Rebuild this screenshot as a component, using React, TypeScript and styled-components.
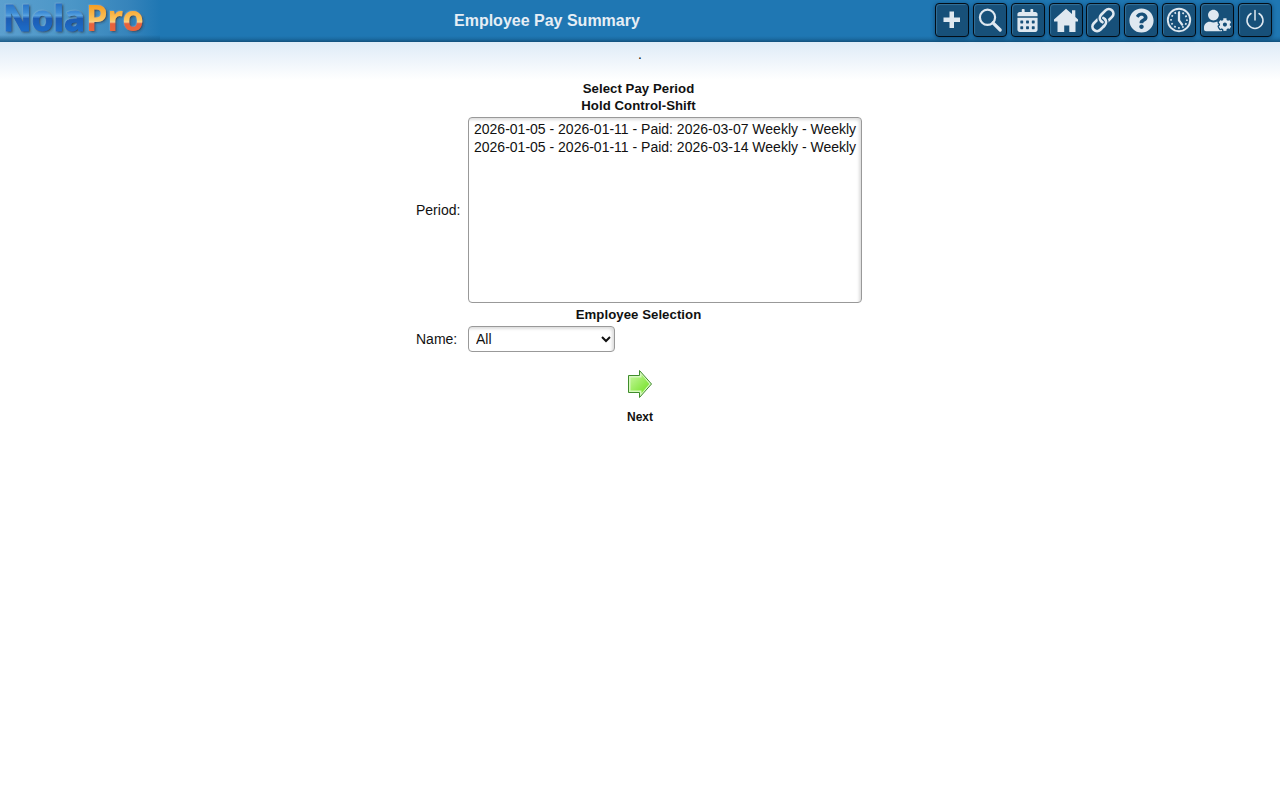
import React from "react";
import styled, { createGlobalStyle } from "styled-components";
import { FaCalendarAlt, FaQuestionCircle, FaUserCog } from "react-icons/fa";

const GlobalStyle = createGlobalStyle`
  * { box-sizing: border-box; }
  body {
    margin: 0;
    background: #fff;
    color: #111;
    font-family: "Liberation Sans", Arial, sans-serif;
    font-size: 14px;
  }
`;

const Header = styled.header`
  display: grid;
  grid-template-columns: 454px 1fr auto;
  height: 42px;
  padding-right: 8px;
  background: linear-gradient(#1f77b3 0, #1f77b3 36px, #1b6ca3 39px, #11507c 42px);
`;

const LogoBox = styled.div`
  width: 160px;
  height: 42px;
  background:
    linear-gradient(rgba(17, 80, 124, 0) 35px, rgba(17, 80, 124, 0.85) 42px),
    linear-gradient(90deg, #5b9fce 0, #4b96c7 45%, #3684bb 80%, #1f77b3 100%);
`;

const Title = styled.h1`
  margin: 0;
  font-size: 16px;
  line-height: 42px;
  color: #e6eef5;
  white-space: nowrap;
`;

const Toolbar = styled.nav`
  display: flex;
  gap: 3.9px;
  padding-top: 3px;
`;

const ToolButton = styled.button`
  display: flex;
  align-items: center;
  justify-content: center;
  width: 34px;
  height: 34px;
  padding: 0;
  border: 1px solid #020d17;
  border-radius: 4px;
  background: #175079;
  box-shadow: inset 1px 1px 1px #347099, 0 1px 4px rgba(6, 48, 82, 0.7);
  color: #dfe8f0;
`;

const Fade = styled.div`
  height: 38px;
  background: linear-gradient(#deebf7, #fff);
  text-align: center;
  line-height: 25px;
`;

const Form = styled.form`
  display: grid;
  grid-template-columns: 52px 394px;
  align-items: center;
  width: 446px;
  margin-left: 416px;
`;

const SectionTitle = styled.h2`
  grid-column: 1 / -1;
  margin: 0;
  padding-right: 1px;
  font-size: 13.2px;
  line-height: 17px;
  letter-spacing: 0.05px;
  text-align: center;
`;

const PeriodList = styled.select`
  width: 394px;
  height: 186px;
  margin: 3px 0;
  padding: 2px 3px;
  border: 1px solid #999;
  border-radius: 4px;
  background: #fff;
  box-shadow: inset -2px 2px 3px #ddd;
  color: #111;
  font: 14px "Liberation Sans", Arial, sans-serif;
  overflow: hidden;
  outline: none;

  option {
    min-height: 18px;
    padding: 1px 2px 0;
    line-height: 17px;
  }
`;

const NameSelect = styled.select`
  width: 147px;
  height: 26px;
  margin: 3px 0;
  padding: 0 0 0 3px;
  border: 1px solid #999;
  border-radius: 4px;
  background: #fff;
  box-shadow: inset -2px 2px 3px #ddd;
  color: #111;
  font: 14px "Liberation Sans", Arial, sans-serif;
`;

const NextButton = styled.button`
  display: flex;
  flex-direction: column;
  align-items: center;
  gap: 11px;
  margin: 14px auto 0;
  padding: 0;
  border: 0;
  background: none;
  color: #111;
  font: bold 12px/14px "Liberation Sans", Arial, sans-serif;
`;

const LogoArt = styled.svg`
  display: block;
  overflow: visible;
`;

const Logo = () => (
  <LogoArt width="160" height="42" viewBox="0 0 160 42" role="img" aria-label="NolaPro">
    <defs>
      <linearGradient id="nola" x1="0" y1="4" x2="0" y2="33" gradientUnits="userSpaceOnUse">
        <stop offset="0" stopColor="#2672c6" />
        <stop offset="0.3" stopColor="#3f8dd6" />
        <stop offset="0.4" stopColor="#5aa3e0" />
        <stop offset="0.5" stopColor="#1b5cb4" />
        <stop offset="1" stopColor="#1f6fcb" />
      </linearGradient>
      <linearGradient id="pro" x1="0" y1="4" x2="0" y2="33" gradientUnits="userSpaceOnUse">
        <stop offset="0" stopColor="#f59a1c" />
        <stop offset="0.55" stopColor="#fbc560" />
        <stop offset="0.62" stopColor="#f8d08a" />
        <stop offset="0.68" stopColor="#e8623c" />
        <stop offset="1" stopColor="#e8683c" />
      </linearGradient>
      <filter id="shade" x="-5%" y="-10%" width="112%" height="125%">
        <feDropShadow dx="1.2" dy="1" stdDeviation="0.8" floodColor="#0c2d49" floodOpacity="0.95" />
        <feDropShadow dx="-0.6" dy="-0.6" stdDeviation="0.6" floodColor="#9cc8e8" floodOpacity="0.4" />
      </filter>
    </defs>
    <g fontFamily="'Noto Sans', 'Open Sans', sans-serif" fontWeight="700" fontSize="36" filter="url(#shade)">
      <text x="3" y="31" textLength="82" lengthAdjust="spacingAndGlyphs" fill="url(#nola)" stroke="url(#nola)" strokeWidth="1">Nola</text>
      <text x="86" y="31" textLength="58" lengthAdjust="spacingAndGlyphs" fill="url(#pro)">Pro</text>
    </g>
  </LogoArt>
);

const PlusIcon = () => (
  <svg width="32" height="32" viewBox="0 0 32 32" fill="currentColor">
    <path d="M13.5 7.5h4.5v6h6v4.5h-6v6h-4.5v-6h-6v-4.5h6z" />
  </svg>
);

const SearchIcon = () => (
  <svg width="32" height="32" viewBox="0 0 32 32" fill="none" stroke="currentColor">
    <circle cx="13.5" cy="13.3" r="7.6" strokeWidth="2.2" />
    <path d="M19 18.8l7.2 7.2" strokeWidth="3.2" strokeLinecap="round" />
  </svg>
);

const HomeIcon = () => (
  <svg width="32" height="32" viewBox="0 0 32 32" fill="currentColor">
    <path d="M16 4.7l6 5.3V6.2h3.3v6.7L28 15.4v2.2h-2.5V28h-6.2v-6.5h-5.1V28H7.5V17.6H4v-2.2z" />
  </svg>
);

const LinkIcon = () => (
  <svg width="32" height="32" viewBox="0 0 32 32" fill="none" stroke="currentColor" strokeWidth="2.7">
    <g transform="rotate(-45 16 16)">
      <rect x="2.6" y="11.8" width="15.4" height="9.2" rx="4.6" />
      <path d="M13.6 15.6a4.6 4.6 0 0 1 4.6-4.6h3" stroke="#175079" strokeWidth="4.8" />
      <rect x="13.8" y="11" width="15.4" height="9.2" rx="4.6" />
      <path d="M13.2 21a4.8 4.8 0 0 0 4.8-3.2" stroke="#175079" strokeWidth="4.8" />
      <path d="M11.5 21h1.9a4.6 4.6 0 0 0 4.6-4.6" />
    </g>
  </svg>
);

const ClockIcon = () => (
  <svg width="32" height="32" viewBox="0 0 32 32" fill="none" stroke="currentColor">
    <circle cx="16" cy="16" r="11.2" strokeWidth="1.9" />
    <path d="M16 8.8V16.4l3.1 4.2" strokeWidth="2.3" strokeLinecap="round" />
    <circle cx="16" cy="16" r="7.9" strokeWidth="1.8" strokeDasharray="1.7 2.436" strokeDashoffset="0.85" />
  </svg>
);

const PowerIcon = () => (
  <svg width="32" height="32" viewBox="0 0 32 32" fill="none" stroke="currentColor" strokeWidth="1.5">
    <path d="M12 9.5a8 8 0 1 0 8 0M16 6.5v9.5" strokeLinecap="round" />
  </svg>
);

const ArrowIcon = () => (
  <svg width="26" height="30" viewBox="0 0 26 30">
    <defs>
      <linearGradient id="arrow" x1="0" y1="0" x2="1" y2="1">
        <stop offset="0" stopColor="#c4f79b" />
        <stop offset="1" stopColor="#6fe01f" />
      </linearGradient>
    </defs>
    <path d="M1.5 6.5h11v-5L24.5 15l-12 13.5v-5h-11z" fill="#d7f9be" stroke="#3f8c2b" />
    <path d="M3.5 8.5h11V5.6L22.3 15l-7.8 9.3v-2.8h-11z" fill="url(#arrow)" />
  </svg>
);

const tools = [
  { label: "Add", icon: <PlusIcon /> },
  { label: "Search", icon: <SearchIcon /> },
  { label: "Calendar", icon: <FaCalendarAlt size={23} /> },
  { label: "Home", icon: <HomeIcon /> },
  { label: "Links", icon: <LinkIcon /> },
  { label: "Help", icon: <FaQuestionCircle size={25} /> },
  { label: "Time clock", icon: <ClockIcon /> },
  { label: "User settings", icon: <FaUserCog size={27} /> },
  { label: "Log out", icon: <PowerIcon /> },
];

const periods = [
  "2026-01-05 - 2026-01-11 - Paid: 2026-03-07 Weekly - Weekly",
  "2026-01-05 - 2026-01-11 - Paid: 2026-03-14 Weekly - Weekly",
];

export default function App() {
  return (
    <>
      <GlobalStyle />
      <Header>
        <LogoBox><Logo /></LogoBox>
        <Title>Employee Pay Summary</Title>
        <Toolbar>
          {tools.map((tool) => (
            <ToolButton key={tool.label} type="button" aria-label={tool.label}>{tool.icon}</ToolButton>
          ))}
        </Toolbar>
      </Header>
      <Fade>.</Fade>
      <main>
        <Form>
          <SectionTitle>Select Pay Period<br />Hold Control-Shift</SectionTitle>
          <label htmlFor="period">Period:</label>
          <PeriodList id="period" multiple>
            {periods.map((period) => <option key={period}>{period}</option>)}
          </PeriodList>
          <SectionTitle>Employee Selection</SectionTitle>
          <label htmlFor="name">Name:</label>
          <NameSelect id="name"><option>All</option></NameSelect>
        </Form>
        <NextButton type="button"><ArrowIcon />Next</NextButton>
      </main>
    </>
  );
}
